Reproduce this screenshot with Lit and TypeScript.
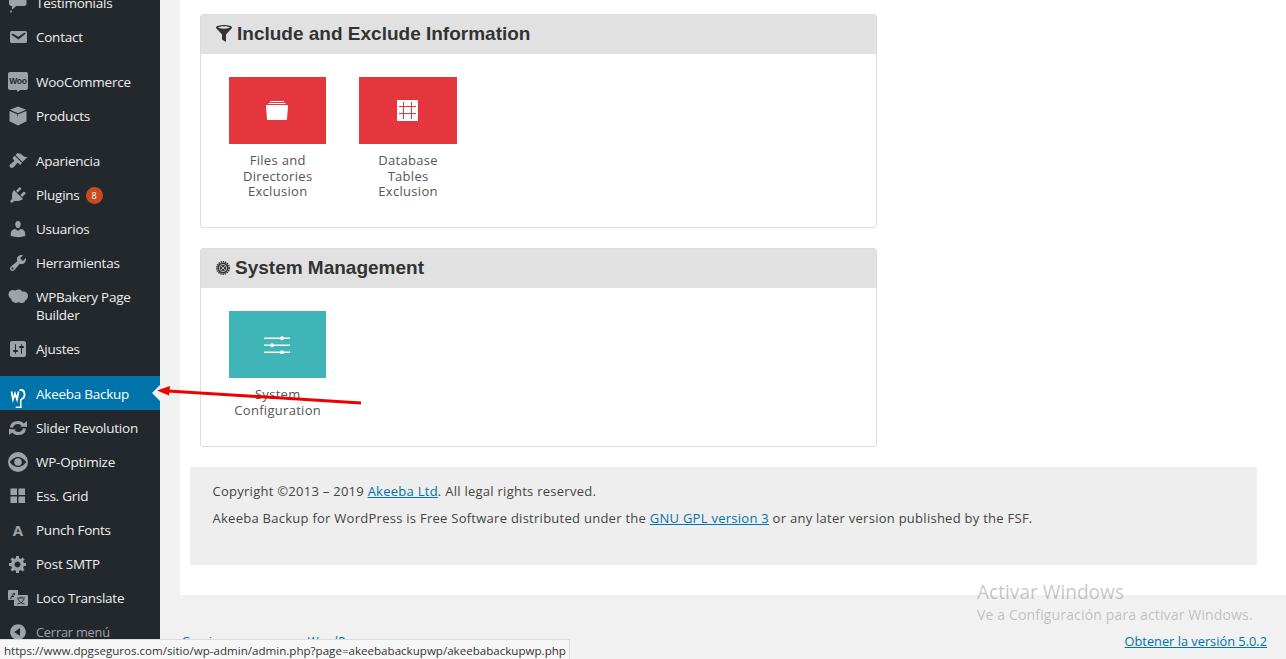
import { LitElement, html, css, svg } from "lit";
import { customElement } from "lit/decorators.js";

const dash = (d: string, size = 20) =>
  html`<svg class="ic" width=${size} height=${size} viewBox="0 0 20 20" fill="currentColor">${svg`<path fill-rule="evenodd" d=${d}></path>`}</svg>`;

const raw = (content: unknown) =>
  html`<svg class="ic" width="20" height="20" viewBox="0 0 20 20" fill="currentColor">${content}</svg>`;

const icons: Record<string, unknown> = {
  testimonials: dash("M2 1h14c1.5 0 2.5 1 2.5 2.5v7c0 1.5-1 2.5-2.5 2.5H8l-3 3c-.5.5-1 .2-1-.4V13H3.500C2 13 1 12 1 10.500v-7C1 2 1 1 2 1zM3 17.500a1 1 0 1 0 0 2 1 1 0 0 0 0-2z"),
  mail: dash("M3.870 4h13.250C18.370 4 19 4.590 19 5.790v8.420c0 1.190-.63 1.790-1.880 1.790H3.870c-1.250 0-1.880-.6-1.880-1.790V5.790c0-1.200.63-1.790 1.880-1.790zm6.620 8.600l6.740-5.530c.24-.2.430-.66.130-1.070-.29-.41-.82-.42-1.170-.17l-5.700 3.860L4.800 6.830c-.35-.25-.88-.24-1.170.17-.3.410-.11.870.13 1.070z"),
  woo: raw(svg`<path d="M2 0h16c1 0 2 .8 2 2v14c0 1-1 2-2 2h-6l-2.500 2-.6-2H2c-1 0-2-1-2-2V2C0 .8 1 0 2 0z"></path><text x="10" y="12" text-anchor="middle" font-family="Liberation Sans, sans-serif" font-size="8.500" font-weight="700" fill="#23282d">Woo</text>`),
  box: dash("M10 .5l8 3.300-8 3.400-8-3.400zM1.500 5l7.800 3.300.4 3.700.4-3.700L18.500 5v10.200L10 19.500l-8.500-4.300z"),
  brush: dash("M14.480 11.060L7.410 3.990l1.500-1.500c.5-.56 2.300-.47 3.510.32 1.210.8 1.430 1.280 2.910 2.100 1.180.64 2.450 1.260 4.450.85zm-.71.71L6.700 4.700 4.930 6.470c-.39.39-.39 1.020 0 1.410l1.060 1.060c.39.39.39 1.030 0 1.420-.6.6-1.430 1.110-2.210 1.690-.35.26-.7.53-1.010.84C1.430 13.230.91 14.960 2.150 16.200c1.240 1.240 2.970.72 4.310-.62.31-.31.58-.66.84-1.010.58-.78 1.090-1.610 1.690-2.210.39-.39 1.030-.39 1.420 0l1.060 1.060c.39.39 1.020.39 1.410 0z"),
  plug: dash("M13.110 4.360L9.870 7.600 8 5.730l3.240-3.240c.35-.34 1.050-.2 1.560.32.52.51.66 1.210.31 1.550zm-8 1.770l.91-1.120 9.010 9.010-1.190.84c-.71.71-2.630 1.160-3.820 1.160H6.140L4.900 17.260c-.59.59-1.540.59-2.120 0-.59-.58-.59-1.530 0-2.120l1.240-1.240v-3.880c0-1.130.4-3.190 1.090-3.890zm7.260 3.970l3.240-3.240c.34-.35 1.040-.21 1.550.31.52.51.66 1.210.31 1.550l-3.240 3.250z"),
  user: dash("M10 9.250c-2.270 0-2.730-3.440-2.730-3.440C7 4.020 7.820 2 9.970 2c2.160 0 2.980 2.020 2.710 3.810 0 0-.41 3.440-2.680 3.440zm0 2.570L12.720 10c2.390 0 4.520 2.330 4.520 4.530v2.490s-3.650 1.130-7.240 1.130c-3.650 0-7.240-1.130-7.240-1.130v-2.490c0-2.250 1.940-4.480 4.470-4.480z"),
  tools: dash("M16.680 9.770c-1.340 1.340-3.300 1.670-4.950.99l-5.410 6.520c-.99.99-2.590.99-3.580 0s-.99-2.590 0-3.570l6.520-5.420c-.68-1.650-.35-3.610.99-4.950 1.280-1.280 3.120-1.620 4.720-1.060l-2.890 2.890 2.820 2.820 2.860-2.870c.53 1.580.18 3.390-1.080 4.650zM3.810 16.210c.4.39 1.040.39 1.430 0 .4-.4.4-1.040 0-1.430-.39-.4-1.030-.4-1.430 0-.39.39-.39 1.030 0 1.430z"),
  cloud: raw(svg`<circle cx="5" cy="6.500" r="4.500"></circle><circle cx="10.500" cy="5.500" r="4"></circle><circle cx="15.500" cy="8" r="4.500"></circle><circle cx="8" cy="10" r="5"></circle><circle cx="13.500" cy="11" r="4"></circle>`),
  sliders: dash("M18 16V4c0-1.100-.9-2-2-2H4c-1.100 0-2 .9-2 2v12c0 1.100.9 2 2 2h12c1.100 0 2-.9 2-2zM8 11h1c.55 0 1 .45 1 1s-.45 1-1 1H8v1.500c0 .28-.22.5-.5.5s-.5-.22-.5-.5V13H6c-.55 0-1-.45-1-1s.45-1 1-1h1V5.500c0-.28.22-.5.5-.5s.5.22.5.5V11zm5-2h-1c-.55 0-1-.45-1-1s.45-1 1-1h1V5.500c0-.28.22-.5.5-.5s.5.22.5.5V7h1c.55 0 1 .45 1 1s-.45 1-1 1h-1v5.500c0 .28-.22.5-.5.5s-.5-.22-.5-.5V9z"),
  akeeba: html`<svg class="ic" width="20" height="28" viewBox="0 0 20 28" fill="none" stroke="#fff">${svg`<path d="M3.500 11.500l1.500 8 2-6 2 6 1.500-8" stroke-width="1.800"></path><path d="M11.500 10h1.500c2.500 0 3.500 2 3.500 4.500s-1 4.500-3.500 4.500" stroke-width="1.800"></path><path d="M12.800 19v8M7.700 27.300h6" stroke-width="1.500"></path>`}</svg>`,
  refresh: raw(svg`<path d="M3.500 9.500C4 6.300 6.700 4.500 10 4.500c2 0 3.800.9 4.800 2.400" fill="none" stroke="currentColor" stroke-width="3.200"></path><path d="M12 8.500L19 9V3z"></path><path d="M16.500 10.500C16 13.700 13.300 15.500 10 15.500c-2 0-3.800-.9-4.800-2.400" fill="none" stroke="currentColor" stroke-width="3.200"></path><path d="M8 11.500L1 11v6z"></path>`),
  eye: raw(svg`<path fill-rule="evenodd" d="M10 0a10 10 0 1 1 0 20 10 10 0 0 1 0-20zm0 5C6.500 5 3.500 7.500 1.800 10c1.700 2.500 4.700 5 8.200 5s6.500-2.500 8.200-5C16.500 7.500 13.500 5 10 5z"></path><circle cx="10" cy="10" r="3.800"></circle>`),
  grid: raw(svg`<rect x="2.500" y="2.500" width="6.500" height="6.500"></rect><rect x="10.500" y="2.500" width="6.500" height="6.500"></rect><rect x="2.500" y="10.500" width="6.500" height="6.500"></rect><rect x="10.500" y="10.500" width="6.500" height="6.500"></rect>`),
  letter: html`<span class="glyph">A</span>`,
  gear: dash("M18 12h-2.180c-.17.7-.44 1.350-.81 1.930l1.540 1.540-2.100 2.100-1.540-1.540c-.58.36-1.230.63-1.910.79V19H8v-2.180c-.68-.16-1.330-.43-1.910-.79l-1.540 1.540-2.120-2.120 1.540-1.540c-.36-.58-.63-1.230-.79-1.910H1V9.030h2.170c.16-.7.44-1.350.8-1.940L2.430 5.550l2.100-2.100 1.540 1.540c.58-.37 1.240-.64 1.930-.81V2h3v2.180c.68.16 1.330.43 1.910.79l1.540-1.540 2.120 2.120-1.540 1.540c.36.59.64 1.240.8 1.940H18V12zm-8.500 1.500c1.660 0 3-1.340 3-3s-1.340-3-3-3-3 1.340-3 3 1.340 3 3 3z"),
  loco: raw(svg`<rect x="0" y="2" width="10" height="10" rx="1"></rect><text x="5" y="10.500" text-anchor="middle" font-family="Liberation Sans, sans-serif" font-size="8.500" font-weight="700" font-style="italic" fill="#23282d">A</text><rect x="6" y="7" width="14" height="11" rx="1"></rect><path d="M9 10h8M13 8.500V10M10 11c.8 2.500 3.500 4.500 6.500 5M16 11c-.8 2.500-3.500 4.500-6.500 5" stroke="#23282d" stroke-width="1" fill="none"></path>`),
  collapse: dash("M10 2.160c4.330 0 7.840 3.510 7.840 7.840s-3.510 7.840-7.840 7.840S2.160 14.330 2.160 10 5.710 2.160 10 2.160zm2 11.720V6.120L6.180 9.970z"),
};

type Item = { icon: string; label: string; cls?: string; badge?: string };

const items: Item[] = [
  { icon: "testimonials", label: "Testimonials" },
  { icon: "mail", label: "Contact", cls: "sep" },
  { icon: "woo", label: "WooCommerce" },
  { icon: "box", label: "Products", cls: "sep" },
  { icon: "brush", label: "Apariencia" },
  { icon: "plug", label: "Plugins", badge: "8" },
  { icon: "user", label: "Usuarios" },
  { icon: "tools", label: "Herramientas" },
  { icon: "cloud", label: "WPBakery Page Builder", cls: "tall" },
  { icon: "sliders", label: "Ajustes", cls: "sep" },
  { icon: "akeeba", label: "Akeeba Backup", cls: "active" },
  { icon: "refresh", label: "Slider Revolution" },
  { icon: "eye", label: "WP-Optimize" },
  { icon: "grid", label: "Ess. Grid" },
  { icon: "letter", label: "Punch Fonts" },
  { icon: "gear", label: "Post SMTP" },
  { icon: "loco", label: "Loco Translate" },
  { icon: "collapse", label: "Cerrar menú", cls: "dim" },
];

const tileIcons: Record<string, unknown> = {
  folder: html`<svg width="22" height="19" viewBox="0 0 22 19" fill="#fff"><path d="M4 0h14v1H4zM2.500 2h17v1h-17z"></path><path d="M1 4h20c.6 0 1 .4 1 1l-1 13c0 .6-.4 1-1 1H2c-.6 0-1-.4-1-1L0 5c0-.6.4-1 1-1z"></path></svg>`,
  table: html`<svg width="21" height="21" viewBox="0 0 21 21"><rect width="21" height="21" fill="#fff"></rect><path d="M2 6.500h17M2 13.500h17M6.500 2v17M14.500 2v17" stroke="#e5363d" stroke-width="1"></path></svg>`,
  config: html`<svg width="26" height="18" viewBox="0 0 26 18" fill="#fff"><rect x="0" y="1.500" width="26" height="1.500"></rect><rect x="0" y="8.500" width="26" height="1.500"></rect><rect x="0" y="15.500" width="26" height="1.500"></rect><circle cx="18" cy="2.200" r="2"></circle><circle cx="8" cy="9.200" r="2"></circle><circle cx="18" cy="16.200" r="2"></circle></svg>`,
};

@customElement("app-root")
export class AppRoot extends LitElement {
  static styles = css`
    :host {
      display: flex;
      position: relative;
      width: 1286px;
      height: 659px;
      overflow: hidden;
      background: #f1f1f1;
      font-family: "Open Sans", sans-serif;
      color: #444;
    }
    .side {
      flex: none;
      width: 160px;
      background: #23282d;
      overflow: hidden;
    }
    .menu {
      margin-top: -14px;
      display: flex;
      flex-direction: column;
    }
    .row {
      display: flex;
      align-items: center;
      position: relative;
      height: 34px;
      box-sizing: border-box;
      color: #eee;
      font-size: 13.500px;
      letter-spacing: -0.250px;
      line-height: 18px;
    }
    .row.sep { margin-bottom: 11px; }
    .row.tall { height: 52px; }
    .row.tall .txt { width: 110px; }
    .row.active {
      background: #0073aa;
      color: #fff;
      margin-top: -1px;
      margin-bottom: 1px;
      padding-top: 1px;
    }
    .row.active::after {
      content: "";
      position: absolute;
      right: 0;
      top: 50%;
      margin-top: -8px;
      border: 8px solid transparent;
      border-right-color: #f1f1f1;
    }
    .row.dim { color: #a0a5aa; font-size: 12.800px; letter-spacing: -0.200px; }
    .icwrap {
      flex: none;
      width: 36px;
      display: flex;
      justify-content: center;
      color: #9ea3a8;
    }
    .ic { display: block; }
    .glyph {
      display: block;
      font-size: 15px;
      font-weight: 700;
      line-height: 20px;
      letter-spacing: 0;
    }
    .tall .icwrap { align-self: flex-start; padding-top: 8px; }
    .badge {
      display: inline-block;
      margin-left: 6px;
      width: 17px;
      height: 17px;
      line-height: 17px;
      border-radius: 50%;
      background: #ca4a1f;
      color: #fff;
      font-size: 9px;
      text-align: center;
      vertical-align: 1px;
      letter-spacing: 0;
    }
    .main {
      flex: 1;
      min-width: 0;
      display: flex;
      flex-direction: column;
      padding-left: 20px;
    }
    .content {
      height: 595px;
      flex: none;
      box-sizing: border-box;
      background: #fff;
      padding-top: 14px;
      padding-left: 20px;
    }
    .card {
      width: 677px;
      box-sizing: border-box;
      border: 1px solid #ddd;
      border-radius: 3px;
      background: #fff;
      overflow: hidden;
    }
    .card.first { height: 214px; margin-bottom: 20px; }
    .card.second { height: 199px; margin-bottom: 20px; }
    .head {
      height: 40px;
      box-sizing: border-box;
      margin: -1px -1px 0;
      background: #e1e1e1;
      display: flex;
      align-items: center;
      gap: 5px;
      padding-left: 16px;
      padding-bottom: 1px;
      font-family: "Liberation Sans", Arial, sans-serif;
      font-weight: 700;
      font-size: 19px;
      color: #333;
    }
    .tiles {
      display: flex;
      gap: 33px;
      padding: 23px 0 0 28px;
    }
    .cell { width: 97.400px; text-align: center; }
    .tile {
      height: 67px;
      box-sizing: border-box;
      padding-right: 1px;
      display: flex;
      align-items: center;
      justify-content: center;
    }
    .red { background: #e5363d; }
    .teal { background: #3fb5b7; }
    .label {
      margin-top: 9px;
      font-size: 13px;
      letter-spacing: 0.300px;
      line-height: 15.600px;
      color: #555;
    }
    .foot {
      margin: 0 0 0 -10px;
      width: 1067px;
      height: 98px;
      box-sizing: border-box;
      background: #eee;
      padding: 15px 22px 0 22.500px;
      font-size: 13px;
      letter-spacing: 0.265px;
      line-height: 18px;
      color: #444;
    }
    .foot p { margin: 0 0 9px; }
    a { color: #0073aa; text-decoration: underline; }
    .wpfoot {
      display: flex;
      justify-content: space-between;
      align-items: center;
      padding: 37px 19px 0 1px;
      font-size: 12.800px;
      line-height: 18px;
      color: #555;
    }
    .wpfoot .thanks { font-style: italic; }
    .wpfoot a.plain { text-decoration: none; }
    .status {
      position: absolute;
      left: 0;
      bottom: 0;
      height: 20px;
      box-sizing: border-box;
      width: 570px;
      background: #f7f7f7;
      border: 1px solid #dcdcdc;
      border-left: none;
      border-bottom: none;
      padding-left: 4px;
      font-size: 11.580px;
      line-height: 21px;
      color: #333;
      white-space: nowrap;
    }
    .wm {
      position: absolute;
      left: 977px;
      top: 580px;
      color: rgba(120, 120, 120, 0.42);
      pointer-events: none;
    }
    .wm .big { font-size: 19.100px; line-height: 25px; }
    .wm .small { font-size: 14px; letter-spacing: 0.150px; line-height: 20px; }
    .arrow { position: absolute; left: 0; top: 0; pointer-events: none; }
  `;

  private row(i: Item) {
    return html`<div class="row ${i.cls ?? ""}">
      <span class="icwrap">${icons[i.icon]}</span>
      <span class="txt">${i.label}${i.badge ? html`<span class="badge">${i.badge}</span>` : ""}</span>
    </div>`;
  }

  render() {
    return html`
      <nav class="side"><div class="menu">${items.map((i) => this.row(i))}</div></nav>
      <div class="main">
        <div class="content">
          <section class="card first">
            <div class="head">
              <svg width="16" height="17" viewBox="0 0 16 17" fill="#333"><path d="M8 0c4.400 0 8 1 8 2.500 0 .5-.3.8-.7 1.200L10 9.500V17l-4-2.500v-5L.7 3.700C.3 3.300 0 3 0 2.500 0 1 3.600 0 8 0zm0 1.300C4.800 1.300 2.400 1.900 2.400 2.500S4.800 3.700 8 3.700s5.600-.6 5.600-1.200S11.200 1.300 8 1.300z"></path></svg>
              <span>Include and Exclude Information</span>
            </div>
            <div class="tiles">
              <div class="cell"><div class="tile red">${tileIcons.folder}</div><div class="label">Files and Directories Exclusion</div></div>
              <div class="cell"><div class="tile red">${tileIcons.table}</div><div class="label">Database Tables Exclusion</div></div>
            </div>
          </section>
          <section class="card second">
            <div class="head">
              <svg width="14" height="14" viewBox="0 0 14 14"><circle cx="7" cy="7" r="5.600" fill="#333"></circle><circle cx="7" cy="7" r="6.300" fill="none" stroke="#333" stroke-width="1.400" stroke-dasharray="1.400 .8"></circle><circle cx="7" cy="7" r="3.600" fill="none" stroke="#e1e1e1" stroke-width=".8"></circle><path d="M5 5l4 4M9 5L5 9" stroke="#e1e1e1" stroke-width=".8"></path></svg>
              <span>System Management</span>
            </div>
            <div class="tiles">
              <div class="cell"><div class="tile teal">${tileIcons.config}</div><div class="label">System Configuration</div></div>
            </div>
          </section>
          <div class="foot">
            <p>Copyright ©2013 – 2019 <a>Akeeba Ltd</a>. All legal rights reserved.</p>
            <p>Akeeba Backup for WordPress is Free Software distributed under the <a>GNU GPL version 3</a> or any later version published by the FSF.</p>
          </div>
        </div>
        <div class="wpfoot">
          <span class="thanks"><a class="plain">Gracias por crear con</a> <a class="plain">WordPress</a></span>
          <a>Obtener la versión 5.0.2</a>
        </div>
      </div>
      <div class="status">https://www.dpgseguros.com/sitio/wp-admin/admin.php?page=akeebabackupwp/akeebabackupwp.php</div>
      <div class="wm"><div class="big">Activar Windows</div><div class="small">Ve a Configuración para activar Windows.</div></div>
      <svg class="arrow" width="400" height="420" viewBox="0 0 400 420">
        <path d="M361 403L168 391" stroke="#ee0000" stroke-width="3" fill="none"></path>
        <path d="M157 390.500L170 386L169 395.500Z" fill="#ee0000"></path>
      </svg>
    `;
  }
}
